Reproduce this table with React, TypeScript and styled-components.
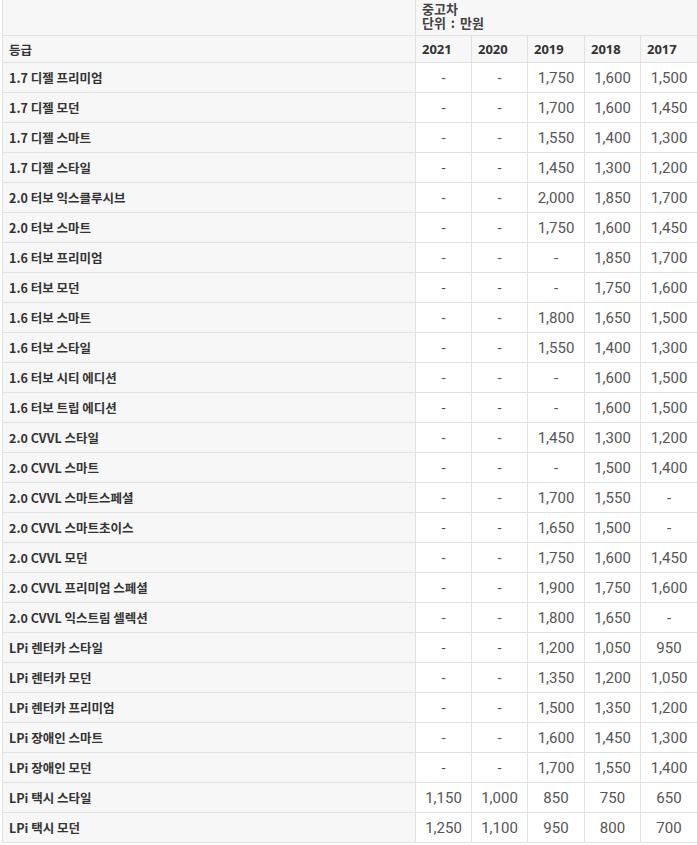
import styled, {createGlobalStyle} from 'styled-components'

const GlobalStyle = createGlobalStyle`
  html, body {
    margin: 0;
    padding: 0;
    background: #fff;
    overflow: hidden;
  }
  * {
    box-sizing: border-box;
  }
`

const years = ['2021', '2020', '2019', '2018', '2017']

const rows: [string, string[]][] = [
  ['1.7 디젤 프리미엄', ['-', '-', '1,750', '1,600', '1,500']],
  ['1.7 디젤 모던', ['-', '-', '1,700', '1,600', '1,450']],
  ['1.7 디젤 스마트', ['-', '-', '1,550', '1,400', '1,300']],
  ['1.7 디젤 스타일', ['-', '-', '1,450', '1,300', '1,200']],
  ['2.0 터보 익스클루시브', ['-', '-', '2,000', '1,850', '1,700']],
  ['2.0 터보 스마트', ['-', '-', '1,750', '1,600', '1,450']],
  ['1.6 터보 프리미엄', ['-', '-', '-', '1,850', '1,700']],
  ['1.6 터보 모던', ['-', '-', '-', '1,750', '1,600']],
  ['1.6 터보 스마트', ['-', '-', '1,800', '1,650', '1,500']],
  ['1.6 터보 스타일', ['-', '-', '1,550', '1,400', '1,300']],
  ['1.6 터보 시티 에디션', ['-', '-', '-', '1,600', '1,500']],
  ['1.6 터보 트립 에디션', ['-', '-', '-', '1,600', '1,500']],
  ['2.0 CVVL 스타일', ['-', '-', '1,450', '1,300', '1,200']],
  ['2.0 CVVL 스마트', ['-', '-', '-', '1,500', '1,400']],
  ['2.0 CVVL 스마트스페셜', ['-', '-', '1,700', '1,550', '-']],
  ['2.0 CVVL 스마트초이스', ['-', '-', '1,650', '1,500', '-']],
  ['2.0 CVVL 모던', ['-', '-', '1,750', '1,600', '1,450']],
  ['2.0 CVVL 프리미엄 스페셜', ['-', '-', '1,900', '1,750', '1,600']],
  ['2.0 CVVL 익스트림 셀렉션', ['-', '-', '1,800', '1,650', '-']],
  ['LPi 렌터카 스타일', ['-', '-', '1,200', '1,050', '950']],
  ['LPi 렌터카 모던', ['-', '-', '1,350', '1,200', '1,050']],
  ['LPi 렌터카 프리미엄', ['-', '-', '1,500', '1,350', '1,200']],
  ['LPi 장애인 스마트', ['-', '-', '1,600', '1,450', '1,300']],
  ['LPi 장애인 모던', ['-', '-', '1,700', '1,550', '1,400']],
  ['LPi 택시 스타일', ['1,150', '1,000', '850', '750', '650']],
  ['LPi 택시 모던', ['1,250', '1,100', '950', '800', '700']],
]

function App() {
  return (
    <>
      <GlobalStyle />
      <Page>
        <Table>
          <Row height={36}>
            <Label />
            <Unit>
              <UnitLine>중고차</UnitLine>
              <UnitLine>단위 : 만원</UnitLine>
            </Unit>
          </Row>
          <Row height={27}>
            <Label>등급</Label>
            {years.map(year => (
              <Year key={year}>{year}</Year>
            ))}
          </Row>
          {rows.map(([grade, prices]) => (
            <Row key={grade} height={30}>
              <Label>{grade}</Label>
              {prices.map((price, i) => (
                <Price key={i}>{price}</Price>
              ))}
            </Row>
          ))}
        </Table>
      </Page>
    </>
  )
}

export default App

const Page = styled.div`
  padding-left: 2px;
  font-family: "Noto Sans CJK KR", "Noto Sans", sans-serif;
`

const Table = styled.div`
  display: flex;
  flex-direction: column;
  width: 695px;
`

const Row = styled.div<{height: number}>`
  display: grid;
  grid-template-columns: 413px 56px 56px 57px 56px 57px;
  height: ${({height}) => height}px;
`

const Cell = styled.div`
  border-left: 1px solid #e2e2e2;
  border-bottom: 1px solid #e2e2e2;
  display: flex;
  align-items: center;
  min-width: 0;
  white-space: nowrap;
`

const Label = styled(Cell)`
  background: #f7f7f7;
  padding: 0 6px;
  font-size: 12.5px;
  font-weight: 700;
  color: #333;
`

const Unit = styled(Cell)`
  grid-column: 2 / -1;
  background: #f7f7f7;
  flex-direction: column;
  align-items: flex-start;
  justify-content: flex-start;
  padding: 2px 6px 0;
  font-size: 13px;
  font-weight: 700;
  color: #444;
`

const UnitLine = styled.span`
  display: block;
  height: 14px;
  line-height: 14px;
  word-spacing: 2px;
`

const Year = styled(Cell)`
  background: #f7f7f7;
  padding: 0 6px;
  font-family: "Noto Sans", sans-serif;
  font-size: 13px;
  font-weight: 700;
  color: #333;
`

const Price = styled(Cell)`
  justify-content: center;
  background: #fff;
  font-family: Roboto, "Noto Sans", sans-serif;
  font-size: 15px;
  color: #555;
`
